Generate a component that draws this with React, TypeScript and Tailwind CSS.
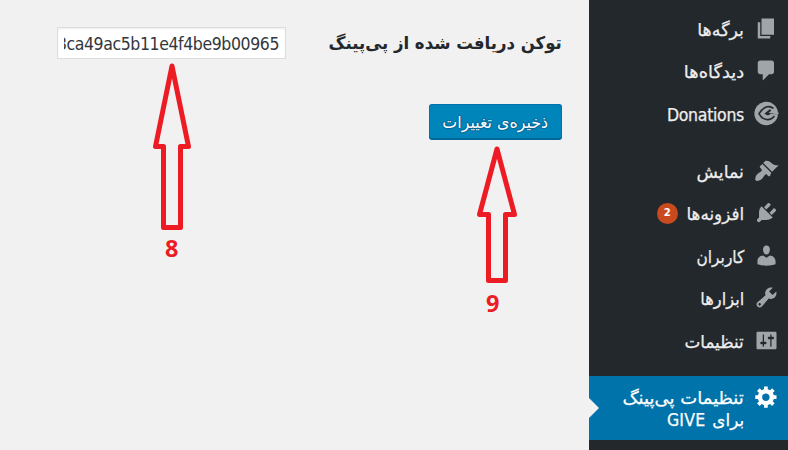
import type { ReactNode } from 'react';

const FA = "font-['DejaVu_Sans',sans-serif]";
const LATIN = "font-['DejaVu_Sans_Condensed','DejaVu_Sans',sans-serif]";

const icons = {
  pages: 'M6 15V2h10v13H6zm-1 1h8v2H3V5h2v11z',
  comments:
    'M5 2h9c1.1 0 2 .9 2 2v7c0 1.1-.9 2-2 2h-2l-5 5v-5H5c-1.1 0-2-.9-2-2V4c0-1.1.9-2 2-2z',
  appearance:
    'M14.48 11.06L7.41 3.99l1.5-1.5c.5-.56 2.3-.47 3.51.32 1.21.8 1.43 1.28 2.91 2.1 1.18.64 2.45 1.26 4.45.85zm-.71.71L6.7 4.7 4.93 6.47c-.39.39-.39 1.02 0 1.41l1.06 1.06c.39.39.39 1.03 0 1.42-.6.6-1.43 1.11-2.21 1.69-.35.26-.7.53-1.01.84C1.34 14.32.43 17 1.36 17.93s3.61.02 5.04-1.41c.3-.31.57-.66.83-1.01.57-.78 1.1-1.6 1.69-2.19.39-.39 1.03-.39 1.41 0l1.06 1.06c.39.39 1.03.39 1.42 0z',
  plugins:
    'M13.11 4.36L9.87 7.6 8 5.73l3.24-3.24c.35-.34 1.05-.2 1.56.32.52.51.66 1.21.31 1.55zm-8 1.77l.91-1.12 9.01 9.01-1.19.84c-.71.71-2.63 1.16-3.82 1.16H6.14L4.9 17.26c-.59.59-1.54.59-2.12 0-.59-.58-.59-1.53 0-2.12l1.24-1.24v-3.88c0-1.13.4-3.19 1.09-3.89zm7.26 3.97l3.24-3.24c.34-.35 1.04-.21 1.55.31.52.51.66 1.21.31 1.55l-3.24 3.25z',
  users:
    'M10 9.25c-2.27 0-2.73-3.44-2.73-3.44C7 4.02 7.82 2 9.97 2c2.16 0 2.98 2.02 2.71 3.81 0 0-.41 3.44-2.68 3.44zm0 2.57L12.72 10c2.39 0 4.52 2.33 4.52 4.53v2.49s-3.65 1.13-7.24 1.13c-3.65 0-7.24-1.13-7.24-1.13v-2.49c0-2.25 1.94-4.48 4.47-4.48z',
  tools:
    'M16.68 9.77c-1.34 1.34-3.3 1.67-4.95.99l-5.41 6.52c-.99.99-2.59.99-3.58 0s-.99-2.59 0-3.57l6.52-5.42c-.68-1.65-.35-3.61.99-4.95 1.28-1.28 3.12-1.62 4.72-1.06l-2.89 2.89 2.82 2.82 2.86-2.87c.53 1.58.18 3.39-1.08 4.65zM3.81 16.21c.4.39 1.04.39 1.43 0 .4-.4.4-1.04 0-1.43-.39-.4-1.03-.4-1.43 0-.39.39-.39 1.03 0 1.43z',
  settings:
    'M18 16V4c0-.55-.45-1-1-1H3c-.55 0-1 .45-1 1v12c0 .55.45 1 1 1h14c.55 0 1-.45 1-1zM8 11h1c.55 0 1 .45 1 1s-.45 1-1 1H8v1.5c0 .28-.22.5-.5.5s-.5-.22-.5-.5V13H6c-.55 0-1-.45-1-1s.45-1 1-1h1V5.5c0-.28.22-.5.5-.5s.5.22.5.5V11zm5-2h-1c-.55 0-1-.45-1-1s.45-1 1-1h1V5.5c0-.28.22-.5.5-.5s.5.22.5.5V7h1c.55 0 1 .45 1 1s-.45 1-1 1h-1v5.5c0 .28-.22.5-.5.5s-.5-.22-.5-.5V9z',
  gear: 'M18 12h-2.18c-.17.7-.44 1.35-.81 1.93l1.54 1.54-2.1 2.1-1.54-1.54c-.58.36-1.23.63-1.91.79V19H8v-2.18c-.68-.16-1.33-.43-1.91-.79l-1.54 1.54-2.12-2.12 1.54-1.54c-.36-.58-.63-1.23-.79-1.91H1V9.03h2.17c.16-.7.44-1.35.8-1.94L2.43 5.55l2.1-2.1 1.54 1.54c.58-.37 1.24-.64 1.93-.81V2h3v2.18c.68.16 1.33.43 1.91.79l1.54-1.54 2.12 2.12-1.54 1.54c.36.59.64 1.24.8 1.94H18V12zm-8.5 1.5c1.66 0 3-1.34 3-3s-1.34-3-3-3-3 1.34-3 3 1.34 3 3 3z',
};

function Icon({ d }: { d: string }) {
  return (
    <svg viewBox="0 0 20 20" className="size-[25px] shrink-0 fill-current">
      <path d={d} />
    </svg>
  );
}

function GiveIcon() {
  return (
    <svg viewBox="0 0 25 25" className="size-[25px] shrink-0">
      <circle cx="12.2" cy="12.5" r="11.8" fill="currentColor" />
      <path
        d="M19.5 7.4C16 4.6 10.5 4.2 5 12.6C8.5 19.6 16 20.6 20.4 15"
        fill="none"
        stroke="#23282d"
        strokeWidth="1.6"
      />
      <path d="M10.5 12.6L15.8 8.2L17.4 9.6L14.5 12H25V13.3H22.6L12.8 14.2Z" fill="#23282d" />
      <path d="M15 12.9L24.6 11.6V12.9L17 14.6Z" fill="currentColor" />
    </svg>
  );
}

type ItemProps = { icon: ReactNode; children: ReactNode; badge?: string; fit?: string };

function Item({ icon, children, badge, fit = '' }: ItemProps) {
  return (
    <li className="flex h-[42.5px] items-center pr-[9px] text-[#a0a5aa]">
      {icon}
      <span
        className={`mr-2.5 mt-[3px] origin-right whitespace-nowrap text-[17.5px] leading-6 text-[#eee] [-webkit-text-stroke:0.25px_#eee] ${fit}`}
      >
        {children}
      </span>
      {badge && (
        <span
          className={`mr-[6px] mt-[2px] flex size-[21px] items-center justify-center rounded-full bg-[#ca4a1f] text-[11.25px] font-bold text-white ${LATIN}`}
        >
          {badge}
        </span>
      )}
    </li>
  );
}

function Arrow({ points, className }: { points: string; className: string }) {
  return (
    <svg className={className} fill="none" stroke="#ed1c24" strokeWidth="5" strokeLinejoin="round">
      <polygon points={points} />
    </svg>
  );
}

export default function App() {
  return (
    <div dir="rtl" className={`relative flex h-[450px] w-[788px] overflow-hidden bg-[#f1f1f1] ${FA}`}>
      <aside className="w-[199px] shrink-0 bg-[#23282d] pt-[7px]">
        <ul>
          <Item icon={<Icon d={icons.pages} />}>برگه‌ها</Item>
          <Item icon={<Icon d={icons.comments} />} fit="scale-x-[1.02]">دیدگاه‌ها</Item>
          <Item icon={<GiveIcon />}>
            <span className={`tracking-[-0.3px] ${LATIN}`}>Donations</span>
          </Item>
        </ul>
        <ul className="mt-[14.5px]">
          <Item icon={<Icon d={icons.appearance} />}>نمایش</Item>
          <Item icon={<Icon d={icons.plugins} />} badge="2" fit="scale-x-[0.96]">افزونه‌ها</Item>
          <Item icon={<Icon d={icons.users} />} fit="scale-x-[0.88]">کاربران</Item>
          <Item icon={<Icon d={icons.tools} />} fit="scale-x-[0.93]">ابزارها</Item>
          <Item icon={<Icon d={icons.settings} />} fit="scale-x-[0.96]">تنظیمات</Item>
        </ul>
        <div className="relative mt-[14px] flex h-16 bg-[#0073aa] pr-[9px] pt-2 text-white">
          <Icon d={icons.gear} />
          <p className="mr-2.5 mt-[3px] whitespace-nowrap text-[17.5px] leading-[22.5px] [-webkit-text-stroke:0.25px_#fff]">
            <span className="inline-block origin-right scale-x-[1.03]">تنظیمات پی‌پینگ</span>
            <br />
            <span className="inline-block origin-right scale-x-[0.96]">برای</span>{' '}
            <span className={`tracking-[0.2px] ${LATIN}`}>GIVE</span>
          </p>
          <span className="absolute left-0 top-[22px] border-y-[10px] border-l-[10px] border-y-transparent border-l-[#f1f1f1]" />
        </div>
      </aside>
      <main className="flex-1 pr-[27px] pt-[27px]">
        <div className="flex h-8 items-center">
          <div className="w-[276px] whitespace-nowrap text-[17.5px] font-bold text-[#23282d]">
            <span className="inline-block origin-right scale-x-[0.945]">توکن دریافت شده از پی‌پینگ</span>
          </div>
          <div
            dir="ltr"
            className="flex h-8 w-[229px] items-center border border-[#ddd] bg-white px-1.5 shadow-[inset_0_1px_2px_rgba(0,0,0,0.07)]"
          >
            <div
              className={`flex w-full justify-end overflow-hidden pt-px text-[17.5px] leading-6 tracking-[-0.4px] text-[#32373c] ${LATIN}`}
            >
              3ca49ac5b11e4f4be9b00965
            </div>
          </div>
        </div>
        <button className="mt-[45px] flex h-[35px] w-[133px] items-center justify-center whitespace-nowrap rounded-[3px] border border-[#0073aa] border-b-[#006799] bg-[#0085ba] text-[16.25px] text-white shadow-[0_1px_0_#006799] [text-shadow:0_-1px_1px_#006799,1px_0_1px_#006799,0_1px_1px_#006799,-1px_0_1px_#006799]">
          <span className="mt-[3px] inline-block scale-x-[0.975]">ذخیره‌ی تغییرات</span>
        </button>
      </main>
      <Arrow
        className="absolute left-[150px] top-[60px] h-[172px] w-[44px]"
        points="22,6 5.5,86.5 13.5,86.5 13.5,167.5 30.5,167.5 30.5,86.5 38.5,86.5"
      />
      <Arrow
        className="absolute left-[475px] top-[143px] h-[142px] w-[44px]"
        points="22,6 4.5,71.5 13.5,71.5 13.5,137.5 30.5,137.5 30.5,71.5 39.5,71.5"
      />
      <span className="absolute left-[165px] top-[236px] font-['Open_Sans',sans-serif] text-[23.5px] font-bold leading-6 text-[#ed1c24]">
        8
      </span>
      <span className="absolute left-[486px] top-[291px] font-['Open_Sans',sans-serif] text-[23.5px] font-bold leading-6 text-[#ed1c24]">
        9
      </span>
    </div>
  );
}
